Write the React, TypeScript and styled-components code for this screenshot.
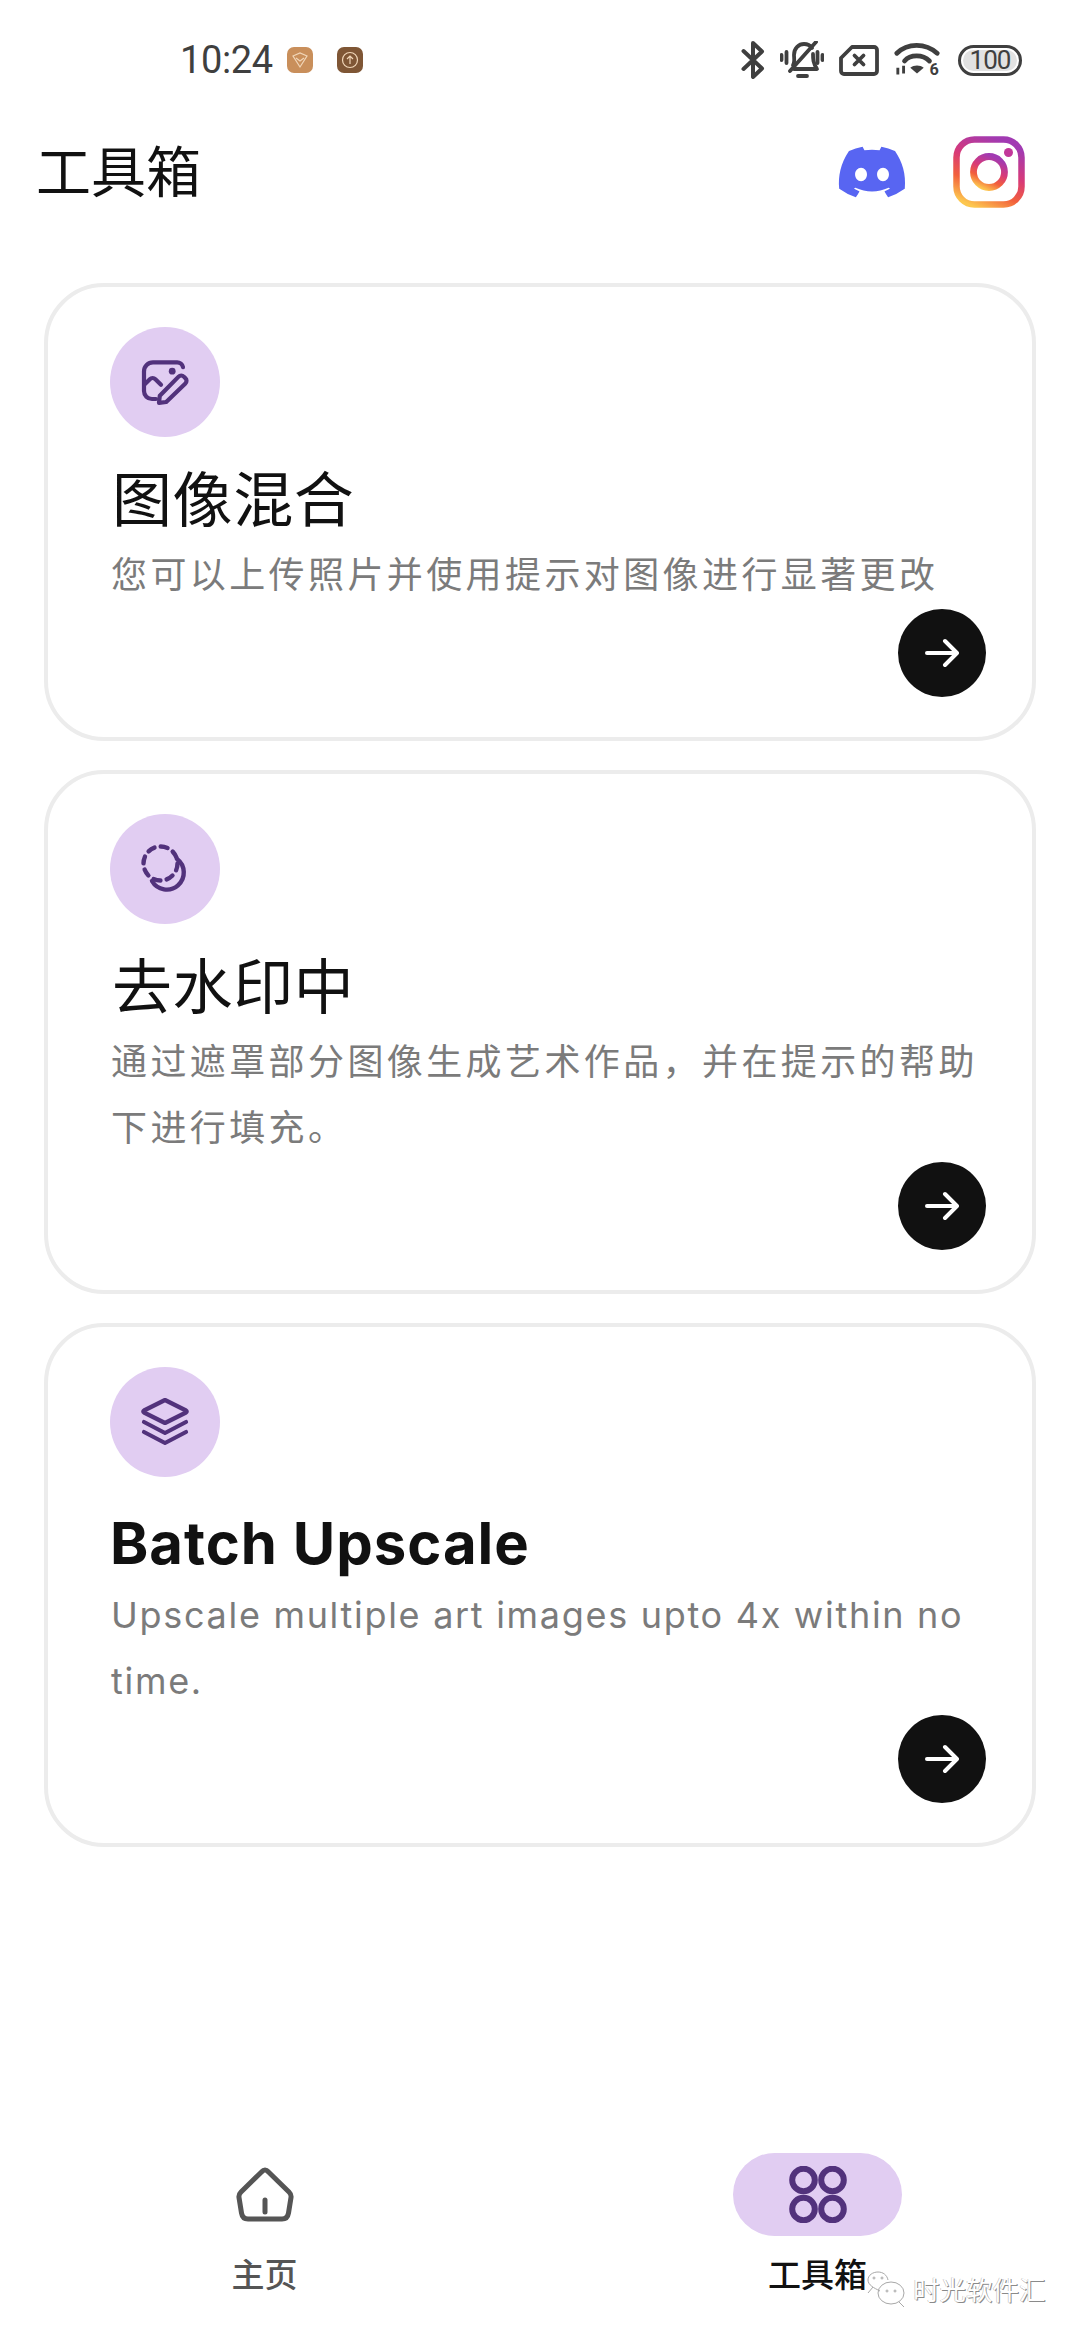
import styled, { createGlobalStyle } from "styled-components";
import { FaDiscord } from "react-icons/fa";

const GlobalStyle = createGlobalStyle`
  html, body {
    margin: 0;
    padding: 0;
    background: #ffffff;
  }
  * {
    box-sizing: border-box;
  }
`;

const Page = styled.div`
  position: relative;
  width: 1080px;
  height: 2340px;
  display: flex;
  flex-direction: column;
  background: #ffffff;
  font-family: "Inter", "Noto Sans CJK SC", sans-serif;
  overflow: hidden;
`;

const StatusBar = styled.div`
  height: 120px;
  display: flex;
  align-items: center;
  justify-content: space-between;
  padding: 0 58px 0 180px;
  color: #3f3f3f;
`;

const StatusLeft = styled.div`
  display: flex;
  align-items: center;
`;

const Time = styled.span`
  font-family: "Roboto", sans-serif;
  font-size: 38px;
  letter-spacing: -0.4px;
  line-height: 40px;
  margin-right: 14px;
`;

const AppChip = styled.span<{ $bg: string }>`
  width: 26px;
  height: 26px;
  border-radius: 7px;
  background: ${(p) => p.$bg};
  display: flex;
  align-items: center;
  justify-content: center;
  margin-right: 24px;
`;

const StatusRight = styled.div`
  display: flex;
  align-items: center;
  gap: 15px;
`;

const Battery = styled.div`
  width: 64px;
  height: 31px;
  border: 3px solid #3f3f3f;
  border-radius: 16px;
  padding: 2px;
  margin-left: 3px;
  display: flex;
`;

const BatteryFill = styled.div`
  flex: 1;
  border-radius: 11px;
  background: #e2e2e2;
  font-family: "Roboto", sans-serif;
  font-size: 26px;
  letter-spacing: -1px;
  line-height: 21px;
  text-align: center;
  color: #3f3f3f;
`;

const Header = styled.header`
  height: 104px;
  margin-bottom: 59px;
  padding: 0 55px 0 36px;
  display: flex;
  align-items: center;
  justify-content: space-between;
`;

const HeaderTitle = styled.h1`
  margin: 0;
  font-size: 55px;
  font-weight: 400;
  line-height: 64px;
  color: #111111;
`;

const HeaderIcons = styled.div`
  display: flex;
  align-items: center;
  gap: 45px;
`;

const CardList = styled.main`
  display: flex;
  flex-direction: column;
  gap: 29px;
  padding: 0 44px;
`;

const Card = styled.section`
  border: 4px solid #ececec;
  border-radius: 60px;
  padding: 40px 46px 40px 62px;
  display: flex;
  flex-direction: column;
`;

const IconCircle = styled.div`
  width: 110px;
  height: 110px;
  border-radius: 50%;
  background: #e1cdf2;
  display: flex;
  align-items: center;
  justify-content: center;
`;

const CardTitle = styled.h2<{ $latin?: boolean }>`
  margin: ${(p) => (p.$latin ? "27px 0 0 0" : "21px 0 0 2px")};
  font-size: ${(p) => (p.$latin ? "58px" : "60px")};
  font-weight: ${(p) => (p.$latin ? 700 : 400)};
  letter-spacing: ${(p) => (p.$latin ? "1px" : "0.6px")};
  line-height: ${(p) => (p.$latin ? "78px" : "84px")};
  color: #111111;
`;

const CardText = styled.p<{ $latin?: boolean }>`
  margin: 0 0 0 1px;
  font-size: 36px;
  font-weight: 400;
  line-height: 66px;
  letter-spacing: ${(p) => (p.$latin ? "1.7px" : "3.4px")};
  color: #7b7b7b;
`;

const ArrowButton = styled.div`
  align-self: flex-end;
  width: 88px;
  height: 88px;
  margin-top: 1px;
  border-radius: 50%;
  background: #111111;
  display: flex;
  align-items: center;
  justify-content: center;
`;

const BottomNav = styled.nav`
  margin-top: auto;
  padding: 0 178px 45px 180px;
  display: flex;
  justify-content: space-between;
`;

const NavItem = styled.div`
  width: 169px;
  display: flex;
  flex-direction: column;
  align-items: center;
  gap: 19px;
`;

const NavIcon = styled.div<{ $active?: boolean }>`
  width: 169px;
  height: 83px;
  border-radius: 42px;
  background: ${(p) => (p.$active ? "#e1cdf2" : "transparent")};
  display: flex;
  align-items: center;
  justify-content: center;
`;

const NavLabel = styled.span<{ $active?: boolean }>`
  font-size: 33px;
  line-height: 40px;
  font-weight: 500;
  color: ${(p) => (p.$active ? "#111111" : "#555555")};
`;

const Watermark = styled.div`
  position: absolute;
  left: 864px;
  top: 2271px;
  display: flex;
  align-items: center;
  gap: 7px;
`;

const WatermarkText = styled.span`
  font-size: 26.5px;
  line-height: 36px;
  color: #ffffff;
  text-shadow: 1px 1px 0 #8a8a8a, -0.6px -0.3px 0 #b5b5b5;
`;

const PURPLE = "#52327c";

const ImageEditIcon = () => (
  <svg width="48" height="48" viewBox="0 0 24 24" fill="none" stroke={PURPLE} strokeWidth="2.1" strokeLinecap="round" strokeLinejoin="round">
    <path d="M21 4.6A3 3 0 0 0 18 2.2H6A4.5 4.5 0 0 0 1.500 6.700V16.500A4 4 0 0 0 5.500 20.500H7.500" />
    <path d="M2 13L4.400 10.600A2 2 0 0 1 7.200 10.600L10 13.400" />
    <circle cx="15.600" cy="6.600" r="1.700" fill={PURPLE} stroke="none" />
    <path d="M9 22.400L9.400 18.900L18.800 9.300A1.800 1.800 0 0 1 21.400 9.300L22.200 10.100A1.800 1.800 0 0 1 22.200 12.700L12.600 22Z" />
  </svg>
);

const MaskIcon = () => (
  <svg width="50" height="50" viewBox="0 0 50 50" fill="none" stroke={PURPLE} strokeWidth="4.4" strokeLinecap="round">
    <circle cx="20.500" cy="19.500" r="17" strokeDasharray="7 6.300" />
    <path d="M37 15A17 17 0 1 1 12 37" />
  </svg>
);

const LayersIcon = () => (
  <svg width="48" height="48" viewBox="0 0 48 48" fill="none" stroke={PURPLE} strokeWidth="4.2" strokeLinecap="round" strokeLinejoin="round">
    <path d="M24 2L45 12.500Q46.500 13.500 45 14.500L24 25L3 14.500Q1.500 13.500 3 12.500Z" />
    <path d="M3 24L24 35L45 24" />
    <path d="M3 34L24 45L45 34" />
  </svg>
);

const ArrowIcon = () => (
  <svg width="34" height="30" viewBox="0 0 34 30" fill="none" stroke="#ffffff" strokeWidth="4" strokeLinecap="round" strokeLinejoin="round">
    <path d="M2 15H31" />
    <path d="M20 3L32 15L20 27" />
  </svg>
);

const BluetoothIcon = () => (
  <svg width="24" height="38" viewBox="0 0 24 38" fill="none" stroke="#3f3f3f" strokeWidth="4" strokeLinejoin="round" strokeLinecap="round">
    <path d="M2.500 10L21 27.500L12 36V2L21 10.500L2.500 28" />
  </svg>
);

const MutedBellIcon = () => (
  <svg width="44" height="38" viewBox="0 0 44 38" fill="none" stroke="#3f3f3f" strokeWidth="3.800" strokeLinecap="round" strokeLinejoin="round">
    <path d="M13 24C15 21 14 17 14 14C14 7 19 3 24 3C27 3 30 4 32 7" />
    <path d="M33 13C33 18 33 22 37 28H14" />
    <path d="M36 1L10 30" />
    <path d="M1.500 14V19M6.500 11V22M37.500 11V22M42.500 14V19" />
    <path d="M18 35H27" />
  </svg>
);

const SimIcon = () => (
  <svg width="40" height="31" viewBox="0 0 40 31" fill="none" stroke="#3f3f3f" strokeWidth="3.800" strokeLinejoin="round" strokeLinecap="round">
    <path d="M13 2H35A3 3 0 0 1 38 5V26A3 3 0 0 1 35 29H5A3 3 0 0 1 2 26V13Z" />
    <path d="M15.500 10.500L24.500 19.500M24.500 10.500L15.500 19.500" />
  </svg>
);

const WifiIcon = () => (
  <svg width="46" height="36" viewBox="0 0 48 36" fill="none" stroke="#3f3f3f" strokeWidth="5" strokeLinecap="round">
    <path d="M3 11C14 0 33 0 45 11" />
    <path d="M11 19C17 12 30 12 37 19" />
    <path d="M24 32L17 26C21 23 27 23 31 26Z" fill="#3f3f3f" stroke="none" />
    <path d="M4 33V26M10 24V32" strokeWidth="3" strokeLinecap="butt" />
    <text x="37" y="33.500" fontFamily="Roboto, sans-serif" fontWeight="700" fontSize="17" fill="#3f3f3f" stroke="none">6</text>
  </svg>
);

const InstagramIcon = () => (
  <svg width="72" height="72" viewBox="0 0 72 72" fill="none">
    <defs>
      <linearGradient id="ig" x1="0.2" y1="1" x2="0.65" y2="0">
        <stop offset="0" stopColor="#fdc74f" />
        <stop offset="0.3" stopColor="#f2603c" />
        <stop offset="0.6" stopColor="#d83a78" />
        <stop offset="1" stopColor="#a13ab2" />
      </linearGradient>
    </defs>
    <rect x="3.500" y="3.500" width="65" height="65" rx="18" stroke="url(#ig)" strokeWidth="6.500" />
    <circle cx="36" cy="36" r="15.500" stroke="url(#ig)" strokeWidth="6.800" />
    <circle cx="55.500" cy="16.500" r="4.500" fill="#c2379a" />
  </svg>
);

const HomeIcon = () => (
  <svg width="58" height="55" viewBox="0 0 58 55" fill="none" stroke="#555555" strokeWidth="5" strokeLinecap="round" strokeLinejoin="round">
    <path d="M25.500 5Q29 1 32.500 5L53 25Q55.500 27.500 55 30.500L52.500 46Q51.500 52 46 52H12Q6.500 52 5.500 46L3 30.500Q2.500 27.500 5 25Z" />
    <path d="M29 33V45" />
  </svg>
);

const GridIcon = () => (
  <svg width="58" height="57" viewBox="0 0 58 57" fill="none" stroke={PURPLE} strokeWidth="6">
    <circle cx="14.500" cy="14" r="11.300" />
    <circle cx="43.500" cy="14" r="11.300" />
    <circle cx="14.500" cy="43" r="11.300" />
    <circle cx="43.500" cy="43" r="11.300" />
  </svg>
);

const WeChatIcon = () => (
  <svg width="42" height="38" viewBox="0 0 42 38" fill="none" stroke="#a8a8a8" strokeWidth="1">
    <path d="M16 20C10 17 4 14 4 9C4 4 9 1 14 1C19 1 23 4 24 9" />
    <path d="M4 22L9 16" />
    <ellipse cx="27" cy="22" rx="13" ry="11" />
    <path d="M35 31L40 36" />
    <circle cx="10" cy="7" r="1" />
    <circle cx="18" cy="7" r="1" />
    <circle cx="23" cy="20" r="1" />
    <circle cx="31" cy="20" r="1" />
  </svg>
);

const App = () => {
  return (
    <Page>
      <GlobalStyle />
      <StatusBar>
        <StatusLeft>
          <Time>10:24</Time>
          <AppChip $bg="#c98f5b">
            <svg width="18" height="18" viewBox="0 0 18 18" fill="none" stroke="#f1d6b8" strokeWidth="1.200">
              <path d="M2 5L9 2L16 5L9 16Z" />
              <path d="M5 7L9 10L13 7" />
            </svg>
          </AppChip>
          <AppChip $bg="#7f5635">
            <svg width="18" height="18" viewBox="0 0 18 18" fill="none" stroke="#f1d6b8" strokeWidth="1.200">
              <circle cx="9" cy="9" r="7.500" />
              <path d="M9 13V5M6 8L9 5L12 8" />
            </svg>
          </AppChip>
        </StatusLeft>
        <StatusRight>
          <BluetoothIcon />
          <MutedBellIcon />
          <SimIcon />
          <WifiIcon />
          <Battery>
            <BatteryFill>100</BatteryFill>
          </Battery>
        </StatusRight>
      </StatusBar>

      <Header>
        <HeaderTitle>工具箱</HeaderTitle>
        <HeaderIcons>
          <FaDiscord size={72} color="#5865f2" />
          <InstagramIcon />
        </HeaderIcons>
      </Header>

      <CardList>
        <Card>
          <IconCircle>
            <ImageEditIcon />
          </IconCircle>
          <CardTitle>图像混合</CardTitle>
          <CardText>您可以上传照片并使用提示对图像进行显著更改</CardText>
          <ArrowButton>
            <ArrowIcon />
          </ArrowButton>
        </Card>
        <Card>
          <IconCircle>
            <MaskIcon />
          </IconCircle>
          <CardTitle>去水印中</CardTitle>
          <CardText>通过遮罩部分图像生成艺术作品，并在提示的帮助下进行填充。</CardText>
          <ArrowButton>
            <ArrowIcon />
          </ArrowButton>
        </Card>
        <Card>
          <IconCircle>
            <LayersIcon />
          </IconCircle>
          <CardTitle $latin>Batch Upscale</CardTitle>
          <CardText $latin>Upscale multiple art images upto 4x within no time.</CardText>
          <ArrowButton>
            <ArrowIcon />
          </ArrowButton>
        </Card>
      </CardList>

      <BottomNav>
        <NavItem>
          <NavIcon>
            <HomeIcon />
          </NavIcon>
          <NavLabel>主页</NavLabel>
        </NavItem>
        <NavItem>
          <NavIcon $active>
            <GridIcon />
          </NavIcon>
          <NavLabel $active>工具箱</NavLabel>
        </NavItem>
      </BottomNav>

      <Watermark>
        <WeChatIcon />
        <WatermarkText>时光软件汇</WatermarkText>
      </Watermark>
    </Page>
  );
};

export default App;
